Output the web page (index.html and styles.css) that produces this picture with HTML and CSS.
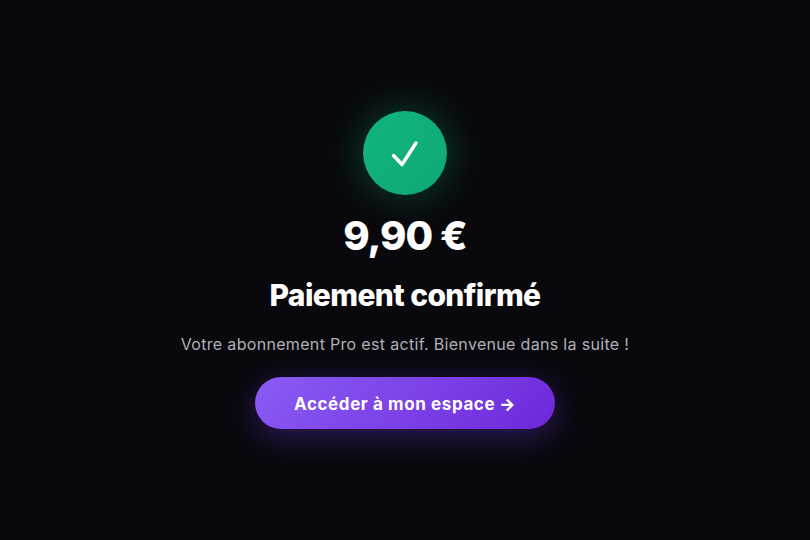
FILE: index.html
```html
<!DOCTYPE html>
<html lang="fr">

<head>
  <title>Paiement confirmé</title>
  <link rel="stylesheet" href="styles.css">
</head>
<body>
  <div class="success-box">
    <div class="check-circle">
      <svg width="32" height="32" viewBox="0 0 32 32" fill="none">
        <path d="M4.5 18.5L13 27.5L27 6" stroke="#fff" stroke-width="3.5" stroke-linecap="round" stroke-linejoin="round"/>
      </svg>
    </div>
    <div class="amount">9,90 €</div>
    <h1>Paiement confirmé</h1>
    <p>Votre abonnement Pro est actif. Bienvenue dans la suite !</p>
    <a class="main-btn" href="#">Accéder à mon espace <span class="arrow">→</span></a>
  </div>
</body>

</html>
```

FILE: styles.css
```css
html, body {
  height: 100%;
}
body {
  margin: 0;
  background-color: #08080d;
  font-family: Inter, "Liberation Sans", sans-serif;
  display: flex;
  justify-content: center;
  align-items: center;
}
.success-box {
  display: flex;
  flex-direction: column;
  align-items: center;
}
.check-circle {
  width: 84px;
  height: 84px;
  border-radius: 50%;
  background: linear-gradient(135deg, #10b47e, #0fa876);
  box-shadow: 0 0 40px rgba(16, 185, 129, 0.35);
  display: flex;
  justify-content: center;
  align-items: center;
}
.amount {
  margin-top: 17px;
  color: #fff;
  font-size: 40px;
  line-height: 48px;
  font-weight: 800;
  letter-spacing: -1px;
}
h1 {
  margin: 17px 0 0;
  color: #fff;
  font-size: 30px;
  line-height: 36px;
  font-weight: 800;
  letter-spacing: -0.6px;
}
p {
  margin: 18px 0 0;
  color: #b0b0b8;
  font-size: 16px;
  line-height: 26px;
  letter-spacing: 0.32px;
}
.main-btn {
  margin-top: 20px;
  width: 300px;
  height: 52px;
  padding-top: 2px;
  box-sizing: border-box;
  border-radius: 26px;
  background: linear-gradient(135deg, #8b5cf6, #6d28d9);
  box-shadow: 0 8px 32px rgba(124, 58, 237, 0.35);
  color: #fff;
  font-size: 17px;
  font-weight: 700;
  letter-spacing: 0.6px;
  text-decoration: none;
  display: flex;
  justify-content: center;
  align-items: center;
  gap: 4px;
}
.arrow {
  font-weight: 800;
}
```
